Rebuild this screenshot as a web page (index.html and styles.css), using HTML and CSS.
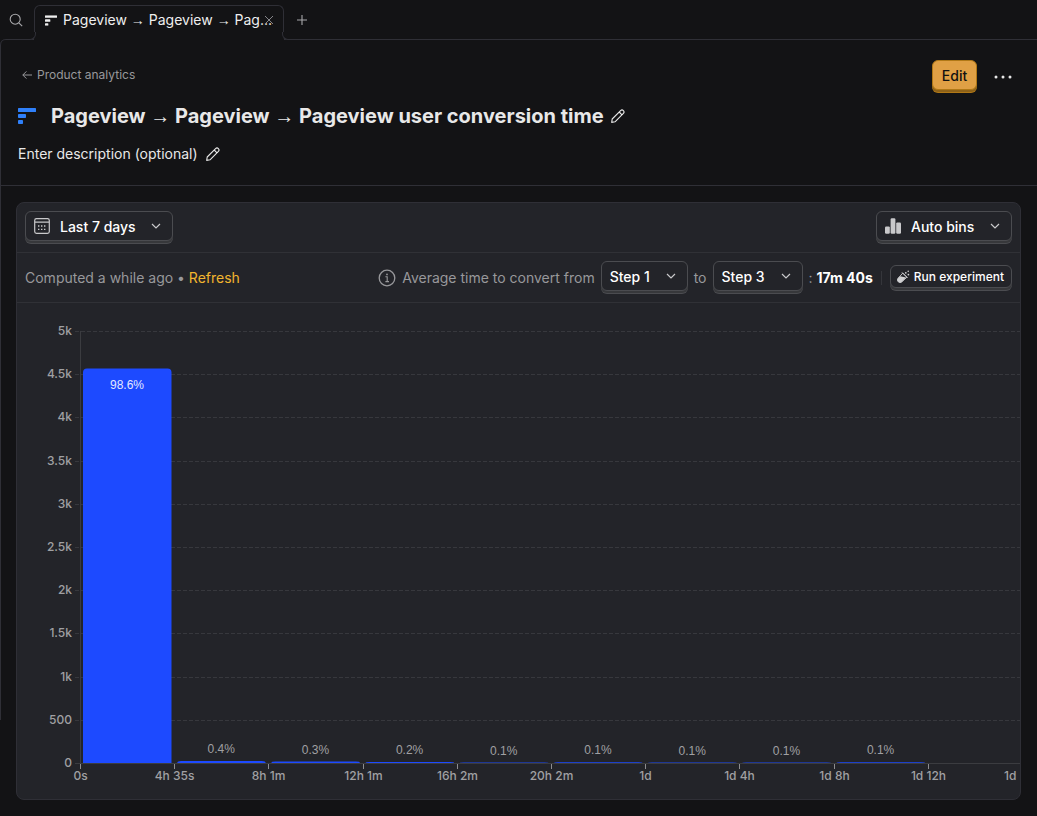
FILE: index.html
```html
<!DOCTYPE html>
<html lang="en">
<head>
<meta charset="utf-8">
<title>Pageview → Pageview → Pageview user conversion time</title>
<link rel="stylesheet" href="styles.css">
</head>
<body>
<svg class="sprite" aria-hidden="true">
  <symbol id="pencil" viewBox="0 0 16 16"><path d="M1.7 14.4 2.2 11 10.6 2.6Q12 1.2 13.4 2.6Q14.8 4 13.4 5.4L5 13.8ZM9.2 4l2.8 2.8" fill="none" stroke="currentColor" stroke-width="1.1" stroke-linejoin="round"/></symbol>
  <symbol id="chevron" viewBox="0 0 12 12"><path d="M2 4l4 4 4-4" fill="none" stroke="currentColor" stroke-width="1.2"/></symbol>
  <symbol id="funnel" viewBox="0 0 18 16"><rect width="18" height="4" rx="0.6"/><rect y="6" width="8" height="4" rx="0.8"/><rect y="12" width="5" height="4" rx="0.8"/></symbol>
</svg>
<nav class="tabs">
  <button class="search" aria-label="Search"><svg width="14" height="14" viewBox="0 0 14 14"><g fill="none" stroke="currentColor" stroke-width="1.1"><circle cx="6.2" cy="6.2" r="5"/><path d="M9.8 9.8l3.4 3.4"/></g></svg></button>
  <div class="tab">
    <a class="tab-link" href="#"><svg width="12" height="11" viewBox="0 0 18 16" fill="currentColor"><use href="#funnel"/></svg><span class="tab-name">Pageview <span class="arrow">→</span> Pageview <span class="arrow">→</span> Pag...</span></a>
    <button class="tab-close" aria-label="Close tab"><svg width="10" height="10" viewBox="0 0 10 10"><path d="M1 1l8 8M9 1L1 9" stroke="currentColor"/></svg></button>
  </div>
  <button class="new-tab" aria-label="New tab"><svg width="10" height="10" viewBox="0 0 10 10"><path d="M5 0v10M0 5h10" stroke="currentColor" stroke-width="1.1"/></svg></button>
</nav>
<main class="scene">
  <header class="header">
    <div class="heading">
      <a class="back" href="#"><svg width="10" height="10" viewBox="0 0 10 10"><path d="M10 5H.8M4.4 1.4.8 5l3.6 3.6" fill="none" stroke="currentColor"/></svg>Product analytics</a>
      <div class="title-row"><svg class="title-icon" width="18" height="16" fill="currentColor"><use href="#funnel"/></svg><h1 class="title">Pageview <span class="arrow">→</span> Pageview <span class="arrow">→</span> Pageview user conversion time</h1><button class="icon-button" aria-label="Edit name"><svg width="16" height="16"><use href="#pencil"/></svg></button></div>
      <div class="description">Enter description (optional)<button class="icon-button" aria-label="Edit description"><svg width="16" height="16"><use href="#pencil"/></svg></button></div>
    </div>
    <div class="actions">
      <button class="edit">Edit</button>
      <button class="icon-button more" aria-label="More"><svg width="18" height="4" viewBox="0 0 18 4" fill="currentColor"><circle cx="2" cy="2" r="1.5"/><circle cx="9" cy="2" r="1.5"/><circle cx="16" cy="2" r="1.5"/></svg></button>
    </div>
  </header>
  <section class="card">
    <div class="row">
      <label class="control"><svg width="16" height="16" viewBox="0 0 16 16"><g fill="none" stroke="currentColor" stroke-width="1.2"><rect x=".7" y=".7" width="14.6" height="14.6" rx="1.8"/><path d="M1 4.2h14"/><path d="M7 8h1.4M10 8h1.4M4 11.4h1.4M7 11.4h1.4M4 8h1.4M10 11.4h1.4" stroke-width="1.4"/></g></svg><select class="select wide" aria-label="Date range"><option>Last 7 days</option></select><svg class="chevron" width="12" height="12"><use href="#chevron"/></svg></label>
      <label class="control"><svg width="16" height="16" viewBox="0 0 16 16" fill="currentColor"><rect y="8.4" width="4.8" height="7.4" rx="1.2"/><rect x="5.6" y=".2" width="4.8" height="15.6" rx="1.2"/><rect x="11.2" y="4.4" width="4.8" height="11.4" rx="1.2"/></svg><select class="select wide" aria-label="Bins"><option>Auto bins</option></select><svg class="chevron" width="12" height="12"><use href="#chevron"/></svg></label>
    </div>
    <div class="row">
      <div class="computed">Computed a while ago • <a class="refresh" href="#">Refresh</a></div>
      <div class="metric">
        <svg width="18" height="18" viewBox="0 0 18 18"><circle cx="9" cy="9" r="7.8" fill="none" stroke="currentColor" stroke-width="1.3"/><path d="M7.4 7.8H9.2V12.6M7.4 12.6h3.6" fill="none" stroke="currentColor" stroke-width="1.1"/><circle cx="9" cy="5.4" r=".9" fill="currentColor"/></svg>
        <span>Average time to convert from</span>
        <label class="control"><select class="select" aria-label="From step"><option>Step 1</option></select><svg class="chevron" width="12" height="12"><use href="#chevron"/></svg></label>
        <span>to</span>
        <label class="control"><select class="select" aria-label="To step"><option>Step 3</option></select><svg class="chevron" width="12" height="12"><use href="#chevron"/></svg></label>
        <span>: <strong class="value">17m 40s</strong></span>
        <span class="divider"></span>
        <button class="control small"><svg class="tube" width="13" height="13" viewBox="0 0 13 13" fill="currentColor"><path d="M5.8 3.1 9.9 7.2 4.7 12Q2.9 13.4 1.2 11.8Q-.4 10.1 1 8.3Z" fill="none" stroke="currentColor" stroke-width=".9"/><path d="M3.2 6.2 9 7.6 4.7 12Q2.9 13.2 1.2 11.8Q-.2 10.1 1 8.3Z"/><path d="M5 2.4l5.6 5.6" stroke="currentColor"/><circle cx="8.8" cy="2.8" r=".9"/><circle cx="11.2" cy="1.2" r=".8"/><circle cx="11.4" cy="4.6" r=".9"/></svg>Run experiment</button>
      </div>
    </div>
    <svg class="chart" id="chart" role="img" aria-label="Conversion time histogram"></svg>
  </section>
</main>
<script src="chart.js"></script>
</body>
</html>
```
FILE: chart.js
```js
const chart = document.getElementById('chart');
const LEFT = 63, TOP = 28, BASE = 460, STEP = 94.2;
function add(tag, attrs, text) {
  const node = document.createElementNS('http://www.w3.org/2000/svg', tag);
  for (const key in attrs) node.setAttribute(key, attrs[key]);
  if (text) node.textContent = text;
  chart.appendChild(node);
}
const scale = ['0', '500', '1k', '1.5k', '2k', '2.5k', '3k', '3.5k', '4k', '4.5k', '5k'];
scale.forEach((name, i) => {
  const y = Math.round(BASE - i * (BASE - TOP) / 10) + 0.5;
  add('line', { x1: LEFT - 5, x2: '100%', y1: y, y2: y, class: i ? 'grid' : 'axis' });
  add('text', { x: LEFT - 8, y: y + 3.5, class: 'tick end' }, name);
});
add('line', { x1: LEFT + 0.5, x2: LEFT + 0.5, y1: TOP, y2: BASE, class: 'axis' });

const bins = [
  ['98.6%', 394.5, 86], ['0.4%', 2, 450], ['0.3%', 1.4, 451], ['0.2%', 1, 451], ['0.1%', 0.4, 452],
  ['0.1%', 0.7, 451], ['0.1%', 0.4, 452], ['0.1%', 0.4, 452], ['0.1%', 0.7, 451]
];
bins.forEach(([label, height, y], i) => {
  const x = LEFT + 3 + i * STEP, top = BASE - height, r = Math.min(4, height);
  add('path', {
    d: `M${x} ${BASE}V${top + r}Q${x} ${top} ${x + 4} ${top}H${x + 84.5}Q${x + 88.5} ${top} ${x + 88.5} ${top + r}V${BASE}Z`,
    class: 'bar'
  });
  add('text', { x: x + 44, y, class: i ? 'share' : 'share inside' }, label);
});
['0s', '4h 35s', '8h 1m', '12h 1m', '16h 2m', '20h 2m', '1d', '1d 4h', '1d 8h', '1d 12h'].forEach((name, i) => {
  const x = Math.round(LEFT + i * STEP) + 0.5;
  add('line', { x1: x, x2: x, y1: BASE + 1, y2: BASE + 6, class: 'mark' });
  add('text', { x, y: BASE + 17, class: 'tick' }, name);
});
add('text', { x: LEFT + 10 * STEP - 18, y: BASE + 17, class: 'tick start' }, '1d');
```
FILE: styles.css
```css
* { box-sizing: border-box; }
body { margin: 0; background: #131315; color: #e8e8e8; font: 14px/20px Inter, sans-serif; font-optical-sizing: none; text-rendering: optimizeSpeed; }
button, select { font: inherit; color: inherit; text-rendering: inherit; background: none; border: 0; padding: 0; margin: 0; cursor: pointer; }
button { display: inline-flex; align-items: center; justify-content: center; }
a { color: inherit; text-decoration: none; }
svg { display: block; flex: none; }
.sprite { position: absolute; width: 0; height: 0; }
.arrow { font-family: "Liberation Sans", sans-serif; font-weight: 400; }

.tabs { display: flex; height: 39px; padding: 5px 0 0 9px; color: #a8a8ab; }
.search { width: 14px; height: 30px; margin-right: 11px; }
.tab { position: relative; z-index: 1; width: 250px; height: 29px; padding: 0 8px 0 10px; border: 1px solid #2f2f36; border-bottom: 0; border-radius: 6px 6px 0 0; background: #131315; box-shadow: 0 6px 0 #131315; color: #eeeeee; }
.tab::before, .tab::after { content: ""; position: absolute; bottom: -6px; width: 7px; height: 7px; border-bottom: 1px solid #2f2f36; background: #131315; }
.tab::before { left: -7px; border-right: 1px solid #2f2f36; border-bottom-right-radius: 6px; }
.tab::after { right: -7px; border-left: 1px solid #2f2f36; border-bottom-left-radius: 6px; }
.tab-link { display: flex; align-items: center; gap: 6px; height: 28px; }
.tab-name { white-space: nowrap; }
.tab-close { position: absolute; right: 9px; top: 9px; color: #85858a; }
.new-tab { width: 10px; height: 30px; margin-left: 13px; }

.scene { position: relative; border-top: 1px solid #2f2f36; border-top-left-radius: 6px; }
.scene::before { content: ""; position: absolute; left: 0; top: -1px; width: 6px; height: 681px; border-left: 1px solid #2f2f36; border-top-left-radius: 6px; pointer-events: none; }
.header { display: flex; justify-content: space-between; height: 146px; padding: 20px 25px 0 18px; border-bottom: 1px solid #2f2f36; }
.heading { display: flex; flex-direction: column; align-items: flex-start; }
.back { display: flex; align-items: center; gap: 5px; padding: 5px 4px; font-size: 12px; color: #98989b; }
.title-row { display: flex; align-items: center; height: 32px; margin-top: 10px; }
.title-icon { color: #2f80fa; }
.title { margin: 0 6px 0 15px; font-size: 20px; line-height: 28px; font-weight: 700; }
.description { display: flex; align-items: center; gap: 7px; margin-top: 12px; }
.actions { display: flex; align-items: flex-start; gap: 17px; }
.edit { height: 30px; padding: 2px 8px 0; border: 1px solid #b17816; border-radius: 6px; background: #e0a045; color: #111111; font-weight: 500; box-shadow: 0 2px 0 #8e6219, 0 3px 0 #b17816; min-width: 45px; }
.more { height: 33px; }

.card { margin: 16px; height: 598px; border: 1px solid #2f2f36; border-radius: 8px; background: #232429; overflow: hidden; }
.row { display: flex; align-items: center; justify-content: space-between; height: 50px; padding: 0 8px; border-bottom: 1px solid #303136; white-space: nowrap; }
.control { display: inline-flex; align-items: center; height: 30px; padding: 0 8px; margin-bottom: 3px; border: 1px solid #4b4c50; border-radius: 6px; background: #232429; color: #c9c9cb; box-shadow: 0 2px 0 #37383b, 0 3px 0 #4b4c50; }
.select { appearance: none; height: 28px; padding-top: 2px; color: #ffffff; font-weight: 500; }
.wide { margin-left: 10px; }
.chevron { margin-left: 14px; margin-right: 2px; }
.computed, .metric { color: #98989b; }
.refresh { color: #f1b52e; }
.metric { display: flex; align-items: center; gap: 6px; }
.value { color: #ffffff; font-weight: 700; }
.divider { width: 1px; height: 14px; margin: 0 2px; background: #35363b; }
.small { gap: 4px; height: 23px; padding: 2px 7px 0 6px; color: #ffffff; font-size: 12px; font-weight: 500; }
.tube { margin-bottom: 2px; color: #d0d0d2; }

.chart { width: 100%; height: 496px; }
.grid { stroke: #37383d; stroke-dasharray: 4 2; }
.axis { stroke: #3b3c40; }
.mark { stroke: #8d8d90; }
.bar { fill: #1d4aff; }
.tick { fill: #a0a0a3; font-size: 12px; font-weight: 500; text-anchor: middle; }
.end { text-anchor: end; }
.start { text-anchor: start; }
.share { fill: #a0a0a3; font: 12px "Liberation Sans", sans-serif; text-anchor: middle; }
.inside { fill: #e3e8ff; }
```
